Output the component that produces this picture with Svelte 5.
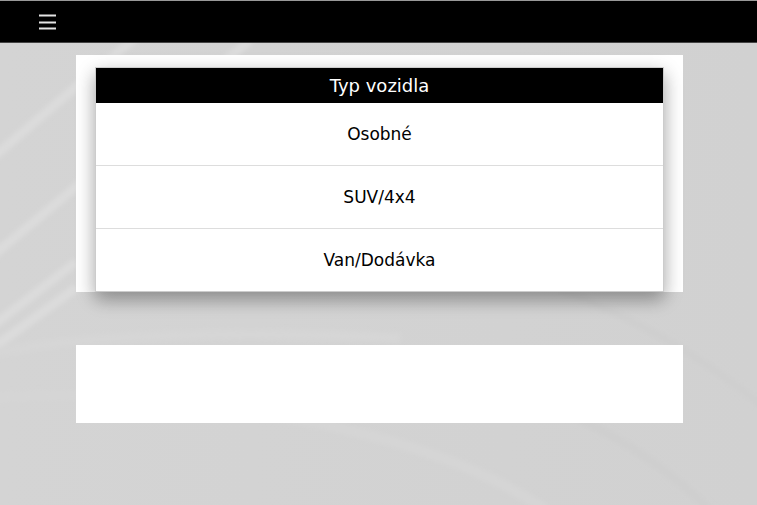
<script lang="ts">
    const types = ["Osobné", "SUV/4x4", "Van/Dodávka"];

    let menuOpen = $state(false);
    let selected = $state("");
</script>

<!-- Decorative backdrop, stretched behind the whole page -->
<svg class="backdrop" viewBox="0 0 757 505" preserveAspectRatio="none" aria-hidden="true">
    <defs>
        <linearGradient id="base" x1="0" y1="0" x2="1" y2="0">
            <stop offset="0" stop-color="#d4d4d4" />
            <stop offset="1" stop-color="#d1d1d1" />
        </linearGradient>
        <filter id="soft" x="-10%" y="-10%" width="120%" height="120%">
            <feGaussianBlur stdDeviation="2" />
        </filter>
    </defs>
    <rect width="757" height="505" fill="url(#base)" />
    <g fill="none" filter="url(#soft)">
        <g stroke="#dbdbdb" stroke-width="9">
            <path d="M-10 160 L76 87 L140 34" />
            <path d="M-10 258 L76 187 L250 40" />
            <path d="M-10 328 L76 262" />
            <path d="M-10 350 L76 288" />
        </g>
        <path d="M-10 354 Q120 326 400 338" stroke="#d6d6d6" stroke-width="10" />
        <path d="M-10 398 Q130 388 300 420 T560 520" stroke="#d5d5d5" stroke-width="10" />
        <path d="M560 290 Q670 330 770 412" stroke="#cfcfcf" stroke-width="8" />
        <path d="M570 415 Q650 450 715 515" stroke="#cfcfcf" stroke-width="9" />
    </g>
</svg>

<header class="topbar">
    <button
        class="menu-button"
        type="button"
        aria-label="Menu"
        aria-expanded={menuOpen}
        onclick={() => (menuOpen = !menuOpen)}
    >
        <svg width="17" height="18" viewBox="0 0 17 18" aria-hidden="true">
            <path d="M0 2.5h17M0 9.5h17M0 15.5h17" stroke="#e4e4e4" stroke-width="2" />
        </svg>
    </button>
</header>

<main>
    <section class="panel">
        <div class="card">
            <h1>Typ vozidla</h1>
            <ul>
                {#each types as type}
                    <li>
                        <button
                            class="option"
                            type="button"
                            aria-pressed={selected === type}
                            onclick={() => (selected = type)}
                        >
                            {type}
                        </button>
                    </li>
                {/each}
            </ul>
        </div>
    </section>
    <section class="panel empty"></section>
</main>

<style>
    :global(body) {
        margin: 0;
        background: #d3d3d3;
        font-family: Verdana, "DejaVu Sans", sans-serif;
    }

    .backdrop {
        position: fixed;
        inset: 0;
        z-index: -1;
        width: 100%;
        height: 100%;
    }

    .topbar {
        display: flex;
        align-items: center;
        box-sizing: border-box;
        height: 43px;
        padding: 0 27px;
        background: #000;
        border-top: 1px solid #999;
        border-bottom: 1px solid #444;
    }

    .menu-button {
        display: flex;
        padding: 12px;
        border: 0;
        background: none;
        cursor: pointer;
    }

    main {
        display: flex;
        flex-direction: column;
        gap: 53px;
        padding: 12px 74px 12px 76px;
    }

    .panel {
        padding: 12px 19px 0;
        background: #fff;
    }

    .empty {
        padding: 0;
        min-height: 78px;
    }

    .card {
        background: #fff;
        border: 1px solid #ccc;
        box-shadow:
            0 8px 16px 0 rgba(0, 0, 0, 0.2),
            0 6px 20px 0 rgba(0, 0, 0, 0.19);
    }

    h1 {
        margin: 0;
        padding: 6px;
        background: #000;
        color: #fff;
        font-size: 18px;
        font-weight: 400;
        line-height: 23px;
        text-align: center;
    }

    ul {
        margin: 0;
        padding: 0;
        list-style: none;
    }

    li + li {
        border-top: 1px solid #ddd;
    }

    .option {
        display: block;
        width: 100%;
        padding: 20px;
        border: 0;
        background: none;
        color: #000;
        font-family: inherit;
        font-size: 17px;
        line-height: 22px;
        text-align: center;
        cursor: pointer;
    }

    .option:hover {
        background: #f1f1f1;
    }
</style>
